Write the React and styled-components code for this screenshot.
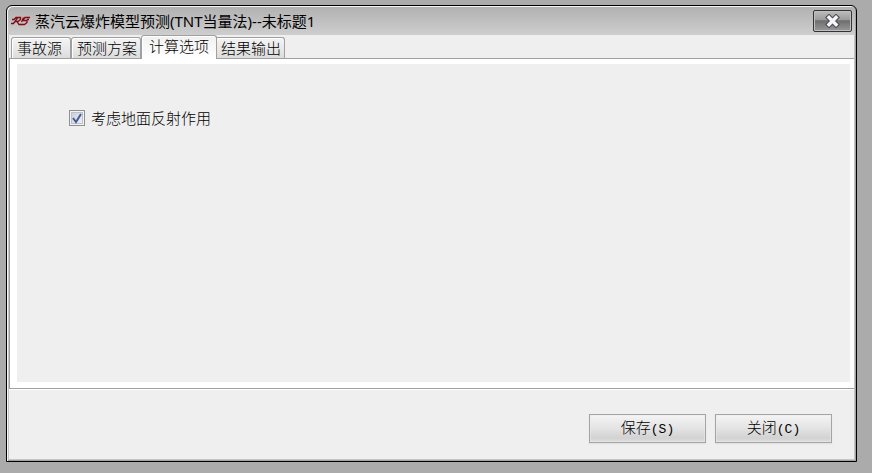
import React, { useState } from "react";
import styled, { createGlobalStyle } from "styled-components";

const GlobalStyle = createGlobalStyle`
* {
box-sizing: border-box;
}
body {
margin: 0;
background: #ababab;
color: #000;
font-family: "Noto Sans CJK SC", sans-serif;
font-size: 15px;
font-weight: 300;
}
button, input {
font: inherit;
color: inherit;
}
`

const Desktop = styled.div`
display: flex;
min-height: 100vh;
padding: 5px 15px 11px 6px;
`

const Window = styled.main`
flex: 1;
display: flex;
flex-direction: column;
border: 1px solid #000;
border-radius: 6px 6px 0 0;
background: linear-gradient(#b0b0b0, #cecece 29px, #c3c5c8 30px);
box-shadow: inset 1px 1px 0 #f4f4f4, inset -1px -1px 0 #a2a2a2;
padding: 1px 2px 2px;
`

const TitleBar = styled.header`
display: flex;
align-items: center;
height: 28px;
padding: 0 2px;
`

const Title = styled.h1`
flex: 1;
margin: 0 0 0 4px;
font-family: "Noto Sans", "Noto Sans CJK SC", sans-serif;
font-size: 15px;
font-weight: 400;
line-height: 24px;
`

const CloseBox = styled.button`
display: flex;
align-items: center;
justify-content: center;
width: 39px;
height: 22px;
padding: 0;
border: 1px solid #333;
border-radius: 2px;
background: linear-gradient(#bdbdbd, #999 46%, #6d6d6d 48%, #999);
box-shadow: inset 0 0 0 1px #c0c0c0;
`

const Body = styled.div`
flex: 1;
display: flex;
flex-direction: column;
background: #efefef;
`

const Tabs = styled.div`
display: flex;
align-items: flex-end;
height: 24px;
padding-left: 2px;
border-bottom: 1px solid #a0a0a0;
`

const Tab = styled.button`
min-width: 60px;
height: ${props => props.$active ? "24px" : "21px"};
padding: ${props => props.$active ? "0 7px 3px" : "0 3px 0 5px"};
margin: ${props => props.$active ? "0 -2px -1px 0" : "0"};
border: 1px solid #a0a0a0;
border-bottom: 0;
border-radius: 3px 3px 0 0;
background: ${props => props.$active ? "linear-gradient(#f1f1f1, #fff)" : "linear-gradient(#f4f4f4, #e9e9e9 50%, #dcdcdc)"};
box-shadow: inset 1px 1px 0 #fff;
line-height: 20px;
text-align: left;
white-space: nowrap;
z-index: ${props => props.$active ? 1 : 0};
`

const Pane = styled.section`
flex: 1;
display: flex;
padding: 5px 4px 6px 7px;
border-left: 1px solid #a0a0a0;
border-bottom: 1px solid #a0a0a0;
background: #fff;
`

const Options = styled.div`
flex: 1;
padding: 44px 52px;
background: #efefef;
`

const Option = styled.label`
display: inline-flex;
align-items: center;
gap: 6px;
line-height: 20px;
`

const Tick = styled.span`
display: grid;
width: 16px;
height: 16px;
& > * {
grid-area: 1 / 1;
}
svg {
pointer-events: none;
}
`

const CheckInput = styled.input`
appearance: none;
width: 16px;
height: 16px;
margin: 0;
border: 1px solid #8e8f8f;
background: linear-gradient(135deg, #c5cad2, #f6f6f6);
box-shadow: inset 0 0 0 1px #f4f4f4, inset 0 0 0 2px #bcc0c8;
`

const Footer = styled.footer`
display: flex;
justify-content: flex-end;
gap: 9px;
padding: 24px 22px 16px;
border-top: 1px solid #fff;
`

const Button = styled.button`
width: 117px;
height: 29px;
padding: 0;
border: 1px solid #a4a4a4;
background: linear-gradient(#f4f4f4, #e4e4e4 48%, #d2d2d2 85%, #dedede);
box-shadow: inset 0 0 0 1px #ececec80, 0 1px 1px #e2e2e2;
line-height: 20px;
`

const Key = styled.span`
font-family: "Liberation Mono", monospace;
font-size: 13px;
`

const tabs = ["事故源", "预测方案", "计算选项", "结果输出"]

const Logo = () => (
    <svg width="20" height="14" viewBox="0 0 20 14" fill="none" stroke="#850b12" strokeWidth="1.3" aria-hidden="true">
        <path d="M1 5.5H3L5 3.5H9.5V5.5L7 7.5H4M6.5 4L4 7.5L2.5 9.5H0M6 7.5L8 10.5H10" />
        <path d="M19 3.5H14L11.5 6.5H16V8.5L13.5 10.5H9.5M12.5 3.5L10.5 8M16 5.5H18" />
    </svg>
)

const Cross = () => (
    <svg width="15" height="14" viewBox="0 0 15 14" fill="none" aria-hidden="true">
        <path d="M4 3.5L11 10.5M11 3.5L4 10.5" stroke="#4b4d5e" strokeWidth="5.6" strokeLinecap="square" />
        <path d="M4 3.5L11 10.5M11 3.5L4 10.5" stroke="#f5f5f5" strokeWidth="3.4" strokeLinecap="square" />
    </svg>
)

const App = () => {
    const [active, setActive] = useState(2)
    const [reflect, setReflect] = useState(true)

    return (
        <Desktop>
            <GlobalStyle />
            <Window>
                <TitleBar>
                    <Logo />
                    <Title>蒸汽云爆炸模型预测(TNT当量法)--未标题1</Title>
                    <CloseBox type="button" aria-label="关闭"><Cross /></CloseBox>
                </TitleBar>
                <Body>
                    <Tabs role="tablist">
                        {tabs.map((name, i) => (
                            <Tab key={name} type="button" role="tab" aria-selected={i === active} $active={i === active} onClick={() => setActive(i)}>{name}</Tab>
                        ))}
                    </Tabs>
                    <Pane role="tabpanel">
                        <Options>
                            <Option>
                                <Tick>
                                    <CheckInput type="checkbox" checked={reflect} onChange={e => setReflect(e.target.checked)} />
                                    {reflect && (
                                        <svg width="16" height="16" viewBox="0 0 16 16" fill="none" aria-hidden="true">
                                            <path d="M4 8L7 12L12 4" stroke="#435a9b" strokeWidth="2" />
                                        </svg>
                                    )}
                                </Tick>
                                考虑地面反射作用
                            </Option>
                        </Options>
                    </Pane>
                    <Footer>
                        <Button type="button">保存<Key>(S)</Key></Button>
                        <Button type="button">关闭<Key>(C)</Key></Button>
                    </Footer>
                </Body>
            </Window>
        </Desktop>
    )
}

export default App
